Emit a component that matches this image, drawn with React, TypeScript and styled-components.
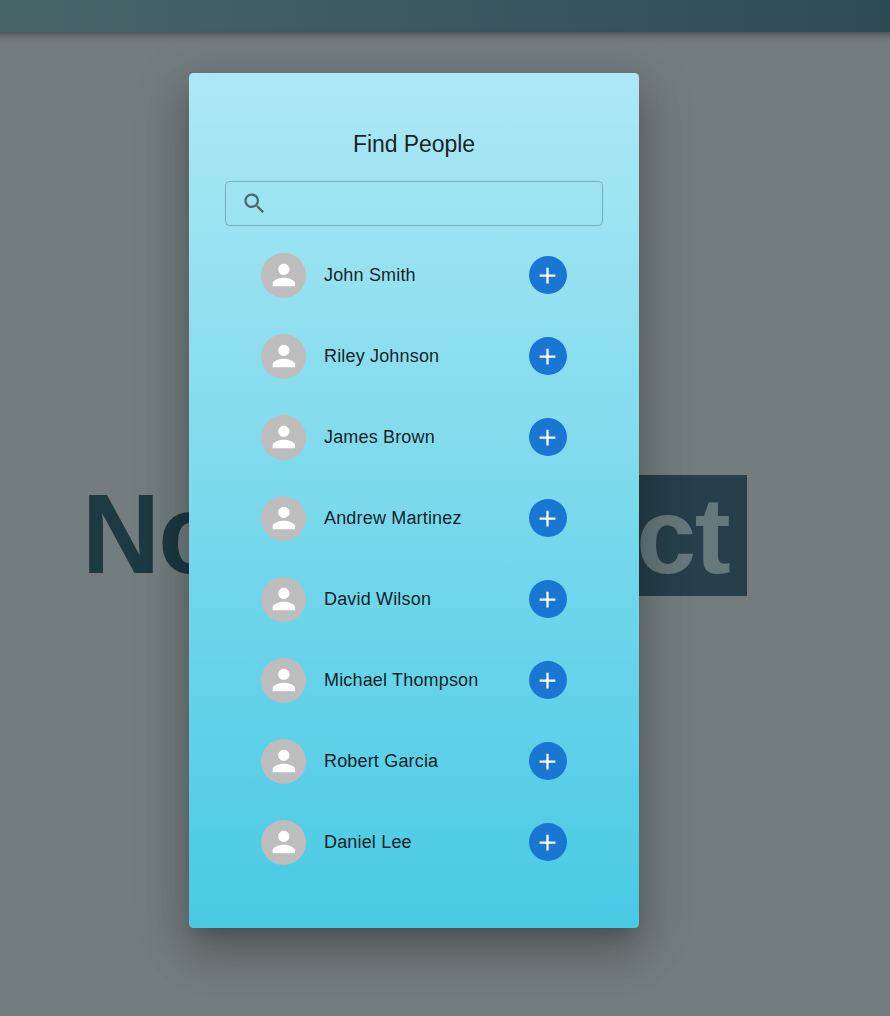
import React from "react";
import styled, { createGlobalStyle } from "styled-components";

const GlobalStyle = createGlobalStyle`
  * { box-sizing: border-box; }
  body {
    margin: 0;
    font-family: "Liberation Sans", Arial, sans-serif;
    background: #e6f8fc;
    overflow: hidden;
  }
`;

const Page = styled.div`
  position: relative;
  display: flex;
  flex-direction: column;
  height: 1016px;
  background: #e7f8fc;
  overflow: hidden;
`;

const AppBar = styled.header`
  flex: none;
  height: 32px;
  margin: 0 -12px;
  background: linear-gradient(to right, #90ced6, #5a96a6);
  box-shadow: 0 2.25px 4.5px -1.125px rgba(0, 0, 0, 0.2),
    0 4.5px 5.6px rgba(0, 0, 0, 0.14), 0 1.125px 11.25px rgba(0, 0, 0, 0.12);
`;

const Hero = styled.main`
  display: flex;
  justify-content: space-between;
  width: 828px;
  margin-top: 443px;
  padding: 0 81px;
`;

const Wordmark = styled.div<{ $boxed?: boolean }>`
  height: 121px;
  padding: ${(p) => (p.$boxed ? "0 18px" : "0 0 0 1px")};
  font-size: 108px;
  font-weight: 700;
  line-height: 121px;
  letter-spacing: -0.01562em;
  color: ${(p) => (p.$boxed ? "#caf0f8" : "#3a7284")};
  background: ${(p) => (p.$boxed ? "#4c7e92" : "transparent")};
`;

const Letters = styled.span<{ $stretch: number }>`
  display: block;
  transform: scaleY(${(p) => p.$stretch});
  transform-origin: 0 98px;
`;

/* Modal layer over the page */
const Backdrop = styled.div`
  position: absolute;
  inset: 0;
  padding: 73px 0 0 189px;
  background: rgba(0, 0, 0, 0.5);
`;

const Dialog = styled.section`
  display: flex;
  flex-direction: column;
  width: 450px;
  height: 855px;
  padding: 53px 36px 0;
  border-radius: 4.5px;
  background: linear-gradient(to bottom, #ade8f4, #48cae4);
  color: rgba(0, 0, 0, 0.87);
  box-shadow: 0 12.375px 16.875px -7.875px rgba(0, 0, 0, 0.2),
    0 27px 42.75px 3.375px rgba(0, 0, 0, 0.14),
    0 10.125px 51.75px 9px rgba(0, 0, 0, 0.12);
`;

const Title = styled.h2`
  margin: 0 0 19px;
  font-size: 23px;
  font-weight: 400;
  line-height: 36px;
  letter-spacing: -0.07px;
  text-align: center;
`;

const SearchField = styled.label`
  display: flex;
  align-items: center;
  height: 45px;
  padding: 0 15px;
  border: 1px solid rgba(0, 0, 0, 0.23);
  border-radius: 4.5px;
  color: rgba(0, 0, 0, 0.54);
`;

const SearchInput = styled.input`
  flex: 1;
  min-width: 0;
  margin-left: 9px;
  border: 0;
  outline: 0;
  background: transparent;
  font: inherit;
`;

const Icon = styled.svg<{ $size: number }>`
  flex: none;
  width: ${(p) => p.$size}px;
  height: ${(p) => p.$size}px;
  fill: currentColor;
`;

const PeopleList = styled.ul`
  display: flex;
  flex-direction: column;
  gap: 36px;
  margin: 27px 0 0;
  padding: 0 36px;
  list-style: none;
`;

const Person = styled.li`
  display: flex;
  align-items: center;
  height: 45px;
`;

const Avatar = styled.div`
  display: flex;
  align-items: center;
  justify-content: center;
  width: 45px;
  height: 45px;
  padding-bottom: 2px;
  border-radius: 50%;
  background: #bdbdbd;
  color: #fff;
`;

const Name = styled.span`
  flex: 1;
  margin-left: 18px;
  font-size: 18px;
  line-height: 27px;
  letter-spacing: 0.00938em;
`;

const AddButton = styled.button`
  display: flex;
  align-items: center;
  justify-content: center;
  width: 38px;
  height: 38px;
  margin-bottom: 1px;
  padding: 0 1px 0 0;
  border: 0;
  border-radius: 50%;
  background: #1976d2;
  color: #fff;
`;

const people = [
  "John Smith",
  "Riley Johnson",
  "James Brown",
  "Andrew Martinez",
  "David Wilson",
  "Michael Thompson",
  "Robert Garcia",
  "Daniel Lee",
];

export default function App() {
  return (
    <Page>
      <GlobalStyle />
      <AppBar />
      <Hero>
        <Wordmark>
          <Letters $stretch={1.04}>No</Letters>
        </Wordmark>
        <Wordmark $boxed>
          <Letters $stretch={1}>ct</Letters>
        </Wordmark>
      </Hero>
      <Backdrop>
        <Dialog role="dialog">
          <Title>Find People</Title>
          <SearchField>
            <Icon $size={27} viewBox="0 0 24 24">
              <path d="M15.5 14h-.79l-.28-.27C15.41 12.59 16 11.11 16 9.5 16 5.91 13.09 3 9.5 3S3 5.91 3 9.5 5.91 16 9.5 16c1.61 0 3.09-.59 4.23-1.57l.27.28v.79l5 4.99L20.49 19l-4.99-5zm-6 0C7.01 14 5 11.99 5 9.5S7.01 5 9.5 5 14 7.01 14 9.5 11.99 14 9.5 14z" />
            </Icon>
            <SearchInput type="text" />
          </SearchField>
          <PeopleList>
            {people.map((name) => (
              <Person key={name}>
                <Avatar>
                  <Icon $size={33.75} viewBox="0 0 24 24">
                    <path d="M12 12c2.21 0 4-1.79 4-4s-1.79-4-4-4-4 1.79-4 4 1.79 4 4 4zm0 2c-2.67 0-8 1.34-8 4v2h16v-2c0-2.66-5.33-4-8-4z" />
                  </Icon>
                </Avatar>
                <Name>{name}</Name>
                <AddButton>
                  <Icon $size={27} viewBox="0 0 24 24">
                    <path d="M19 13h-6v6h-2v-6H5v-2h6V5h2v6h6v2z" />
                  </Icon>
                </AddButton>
              </Person>
            ))}
          </PeopleList>
        </Dialog>
      </Backdrop>
    </Page>
  );
}
